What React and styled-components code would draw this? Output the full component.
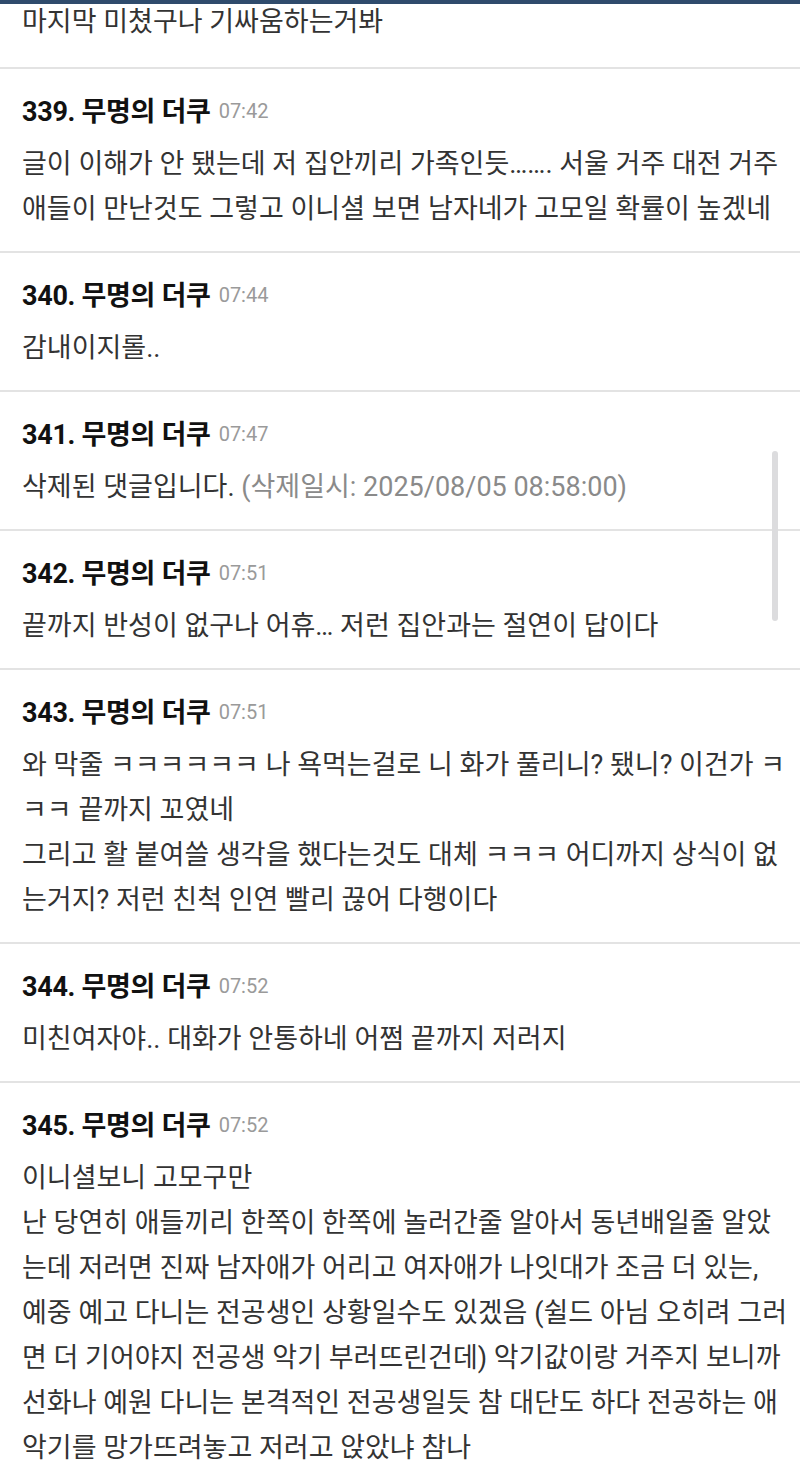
import React from 'react';
import styled, { createGlobalStyle } from 'styled-components';

const GlobalStyle = createGlobalStyle`
  html, body {
    margin: 0;
    padding: 0;
    background: #fff;
  }
  body {
    font-family: Roboto, "Noto Sans CJK KR", "Noto Sans", sans-serif;
    color: #333;
    overflow: hidden;
  }
`;

const TopBar = styled.div`
  position: fixed;
  top: 0;
  left: 0;
  right: 0;
  height: 4px;
  background: #2f4b6c;
  z-index: 2;
`;

const ScrollThumb = styled.div`
  position: fixed;
  top: 451px;
  right: 22px;
  width: 6px;
  height: 170px;
  border-radius: 3px;
  background: #dcdcde;
  z-index: 2;
`;

const Page = styled.div`
  width: 800px;
`;

const Comment = styled.section`
  padding: ${(p) => (p.partial ? '0 20px 22px 22px' : '18px 20px 19px 22px')};
  border-bottom: 2px solid #e3e3e3;
`;

const Header = styled.div`
  display: flex;
  align-items: center;
  height: 44px;
  margin-bottom: 11px;
`;

const Author = styled.span`
  font-size: 27px;
  font-weight: 700;
  color: #111;
  letter-spacing: -0.3px;
`;

const Time = styled.span`
  font-size: 20px;
  color: #9a9a9a;
  margin-left: 8px;
  margin-top: 4px;
`;

const Line = styled.div`
  font-size: 27px;
  line-height: 45px;
  height: 45px;
  white-space: nowrap;
  color: #333;
`;

const Deleted = styled.span`
  color: #8a8a8a;
`;

const comments = [
  { no: 339, time: '07:42', lines: ['글이 이해가 안 됐는데 저 집안끼리 가족인듯……. 서울 거주 대전 거주', '애들이 만난것도 그렇고 이니셜 보면 남자네가 고모일 확률이 높겠네'] },
  { no: 340, time: '07:44', lines: ['감내이지롤..'] },
  { no: 341, time: '07:47', deleted: true },
  { no: 342, time: '07:51', lines: ['끝까지 반성이 없구나 어휴… 저런 집안과는 절연이 답이다'] },
  {
    no: 343,
    time: '07:51',
    lines: [
      '와 막줄 ㅋㅋㅋㅋㅋㅋ 나 욕먹는걸로 니 화가 풀리니? 됐니? 이건가 ㅋ',
      'ㅋㅋ 끝까지 꼬였네',
      '그리고 활 붙여쓸 생각을 했다는것도 대체 ㅋㅋㅋ 어디까지 상식이 없',
      '는거지? 저런 친척 인연 빨리 끊어 다행이다',
    ],
  },
  { no: 344, time: '07:52', lines: ['미친여자야.. 대화가 안통하네 어쩜 끝까지 저러지'] },
  {
    no: 345,
    time: '07:52',
    lines: [
      '이니셜보니 고모구만',
      '난 당연히 애들끼리 한쪽이 한쪽에 놀러간줄 알아서 동년배일줄 알았',
      '는데 저러면 진짜 남자애가 어리고 여자애가 나잇대가 조금 더 있는,',
      '예중 예고 다니는 전공생인 상황일수도 있겠음 (쉴드 아님 오히려 그러',
      '면 더 기어야지 전공생 악기 부러뜨린건데) 악기값이랑 거주지 보니까',
      '선화나 예원 다니는 본격적인 전공생일듯 참 대단도 하다 전공하는 애',
      '악기를 망가뜨려놓고 저러고 앉았냐 참나',
    ],
  },
];

const CommentItem = ({ item }) => (
  <Comment>
    <Header>
      <Author>{item.no}. 무명의 더쿠</Author>
      <Time>{item.time}</Time>
    </Header>
    {item.deleted ? (
      <Line>
        삭제된 댓글입니다. <Deleted>(삭제일시: 2025/08/05 08:58:00)</Deleted>
      </Line>
    ) : (
      item.lines.map((text, i) => <Line key={i}>{text}</Line>)
    )}
  </Comment>
);

export default function App() {
  return (
    <Page>
      <GlobalStyle />
      <TopBar />
      <ScrollThumb />
      <Comment partial>
        <Line>마지막 미쳤구나 기싸움하는거봐</Line>
      </Comment>
      {comments.map((c) => (
        <CommentItem key={c.no} item={c} />
      ))}
    </Page>
  );
}
